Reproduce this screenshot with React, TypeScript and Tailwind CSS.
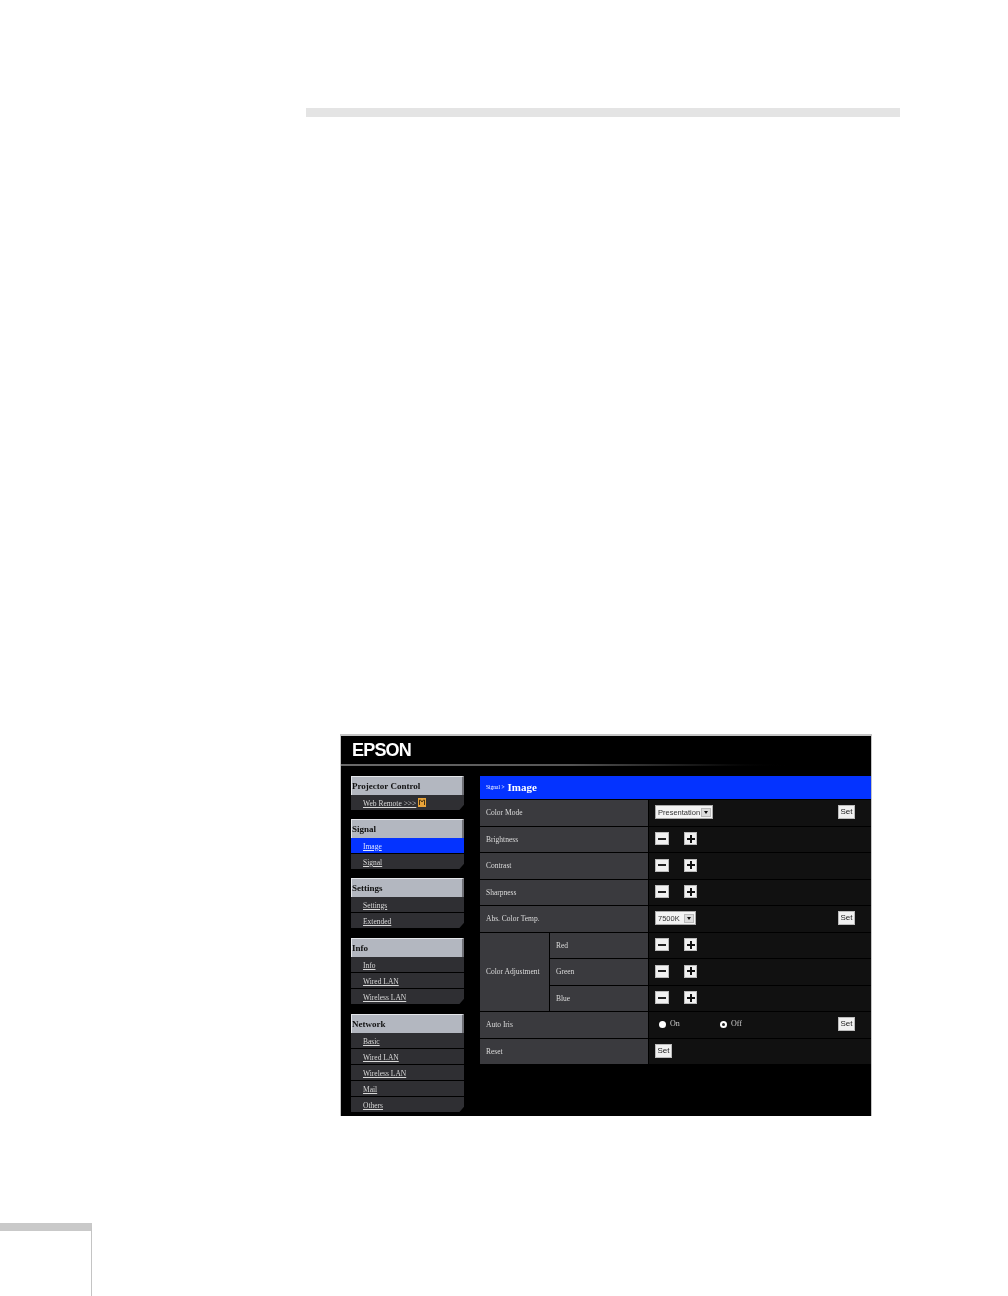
import React from 'react';

const serif = "font-['Liberation_Serif',serif]";

const navGroups = [
  { title: 'Projector Control', items: ['Web Remote >>>'], gap: 'mb-[9px]' },
  { title: 'Signal', items: ['Image', 'Signal'], gap: 'mb-[9px]' },
  { title: 'Settings', items: ['Settings', 'Extended'], gap: 'mb-[10px]' },
  { title: 'Info', items: ['Info', 'Wired LAN', 'Wireless LAN'], gap: 'mb-[10px]' },
  { title: 'Network', items: ['Basic', 'Wired LAN', 'Wireless LAN', 'Mail', 'Others'], gap: '' },
];

const RemoteIcon = () => (
  <svg width="8" height="9" viewBox="0 0 8 9" className="ml-[2px] -mt-[2px]">
    <rect width="8" height="9" fill="#e8a33a" />
    <path d="M1.5 7V2h1l1.5 2 1.5-2h1v5" fill="none" stroke="#4a3410" strokeWidth="1" />
  </svg>
);

const NavGroup = ({ title, items, gap }: { title: string; items: string[]; gap: string }) => (
  <div className={gap}>
    <div className="h-[19px] flex items-center bg-[#b3b7c0] border-t border-l border-[#e4e6ea] border-r-2 border-r-[#6f7076] text-[9px] font-bold text-[#111] leading-none">
      {title}
    </div>
    <div className="flex flex-col gap-px">
      {items.map((item, i) => {
        const active = title === 'Signal' && item === 'Image';
        const last = i === items.length - 1;
        return (
          <div
            key={item}
            className={`h-[15px] flex items-center pl-[12px] pt-[2px] text-[7.5px] leading-none underline ${
              active ? 'bg-[#0433ff] text-[#dfe6ff]' : 'bg-[#2f2f33] text-[#d8d8d8]'
            } ${last ? '[clip-path:polygon(0_0,100%_0,100%_65%,96%_100%,0_100%)]' : ''}`}
          >
            {item}
            {item.startsWith('Web') && <RemoteIcon />}
          </div>
        );
      })}
    </div>
  </div>
);

const SetButton = ({ className = '' }: { className?: string }) => (
  <button className={`w-[17px] h-[14px] bg-[#f1f1f1] border border-[#bbb] text-[8px] leading-none text-[#222] font-['Liberation_Sans',sans-serif] ${className}`}>
    Set
  </button>
);

const Stepper = () => (
  <div className="flex items-center gap-[15px] pl-[6px]">
    <div className="w-[14px] h-[13px] bg-[#f1f1f1] border border-[#bbb] flex items-center justify-center">
      <div className="w-[8px] h-[2px] bg-[#222]" />
    </div>
    <div className="w-[13px] h-[13px] bg-[#f1f1f1] border border-[#bbb] relative flex items-center justify-center">
      <div className="w-[8px] h-[2px] bg-[#111]" />
      <div className="absolute w-[2px] h-[8px] bg-[#111]" />
    </div>
  </div>
);

const Select = ({ label, width }: { label: string; width: string }) => (
  <div className={`${width} h-[14px] bg-[#f4f4f4] border border-[#aaa] flex items-center justify-between pl-[2px] pr-px text-[7.5px] leading-none text-[#333] font-['Liberation_Sans',sans-serif]`}>
    <span>{label}</span>
    <span className="w-[10px] h-[9px] bg-[#ddd] border border-[#bbb] flex items-center justify-center">
      <span className="w-0 h-0 border-x-[2.5px] border-x-transparent border-t-[3px] border-t-[#111]" />
    </span>
  </div>
);

const Row = ({ label, children }: { label: string; children?: React.ReactNode }) => (
  <div className="flex h-[25.5px]">
    <div className="w-[168px] bg-[#3a3a3e] flex items-center pl-[6px] text-[7.5px] text-[#dcdcdc] leading-none">{label}</div>
    <div className="flex-1 bg-[#111] flex items-center ml-px pb-px">{children}</div>
  </div>
);

const Radio = ({ label, checked }: { label: string; checked?: boolean }) => (
  <div className="flex items-center gap-[4px] text-[8px] leading-none text-[#ccc]">
    <span className="w-[7px] h-[7px] rounded-full bg-white flex items-center justify-center">
      {checked && <span className="w-[3px] h-[3px] rounded-full bg-[#222]" />}
    </span>
    {label}
  </div>
);

const SubRow = ({ label }: { label: string }) => (
  <div className="flex h-[25.5px]">
    <div className="w-[98px] bg-[#3a3a3e] flex items-center pl-[6px] text-[7.5px] text-[#dcdcdc] leading-none">{label}</div>
    <div className="flex-1 bg-[#111] flex items-center ml-px pb-px">
      <Stepper />
    </div>
  </div>
);

const WebControl = () => (
  <div className={`w-[532px] h-[382px] bg-black border-x border-t-2 border-[#c4c4c4] ${serif} flex flex-col blur-[0.35px]`}>
    <div className="h-[28px] flex items-center pl-[11px] shrink-0">
      <span className="font-['Liberation_Sans',sans-serif] font-bold text-[18px] tracking-[-0.8px] text-white leading-none">EPSON</span>
    </div>
    <div className="h-[2px] w-[460px] bg-gradient-to-r from-[#6a6a6a] via-[#555] to-black shrink-0" />
    <div className="flex pt-[10px]">
      <div className="w-[113px] ml-[10px]">
        {navGroups.map((g) => (
          <NavGroup key={g.title} title={g.title} items={g.items} gap={g.gap} />
        ))}
      </div>
      <div className="ml-[16px] flex-1 flex flex-col gap-px">
        <div className="h-[23px] bg-[#0433ff] flex items-center pl-[6px] text-white leading-none">
          <span className="text-[5.5px] mr-[3px]">Signal &gt;</span>
          <span className="text-[11px] font-bold">Image</span>
        </div>
        <Row label="Color Mode">
          <div className="flex-1 flex items-center justify-between pl-[6px] pr-[16px]">
            <Select label="Presentation" width="w-[58px]" />
            <SetButton />
          </div>
        </Row>
        <Row label="Brightness"><Stepper /></Row>
        <Row label="Contrast"><Stepper /></Row>
        <Row label="Sharpness"><Stepper /></Row>
        <Row label="Abs. Color Temp.">
          <div className="flex-1 flex items-center justify-between pl-[6px] pr-[16px]">
            <Select label="7500K" width="w-[41px]" />
            <SetButton />
          </div>
        </Row>
        <div className="flex h-[78.5px]">
          <div className="w-[69px] bg-[#3a3a3e] flex items-center pl-[6px] text-[7.5px] text-[#dcdcdc] leading-none whitespace-nowrap">Color Adjustment</div>
          <div className="flex-1 flex flex-col gap-px ml-px">
            <SubRow label="Red" />
            <SubRow label="Green" />
            <SubRow label="Blue" />
          </div>
        </div>
        <Row label="Auto Iris">
          <div className="flex-1 flex items-center pl-[10px] pr-[16px]">
            <div className="w-[61px]"><Radio label="On" /></div>
            <Radio label="Off" checked />
            <SetButton className="ml-auto" />
          </div>
        </Row>
        <Row label="Reset">
          <SetButton className="ml-[6px]" />
        </Row>
      </div>
    </div>
  </div>
);

export default function App() {
  return (
    <div className="w-[1008px] h-[1296px] bg-white overflow-hidden flex flex-col">
      <div className="ml-[306px] mt-[108px] w-[594px] h-[9px] bg-[#e4e4e4] shrink-0" />
      <div className="ml-[340px] mt-[617px] shrink-0">
        <WebControl />
      </div>
      <div className="mt-[107px] w-[92px] h-[73px] border-t-[8px] border-t-[#c9c9c9] border-r border-r-[#c4c4c4] shrink-0" />
    </div>
  );
}
